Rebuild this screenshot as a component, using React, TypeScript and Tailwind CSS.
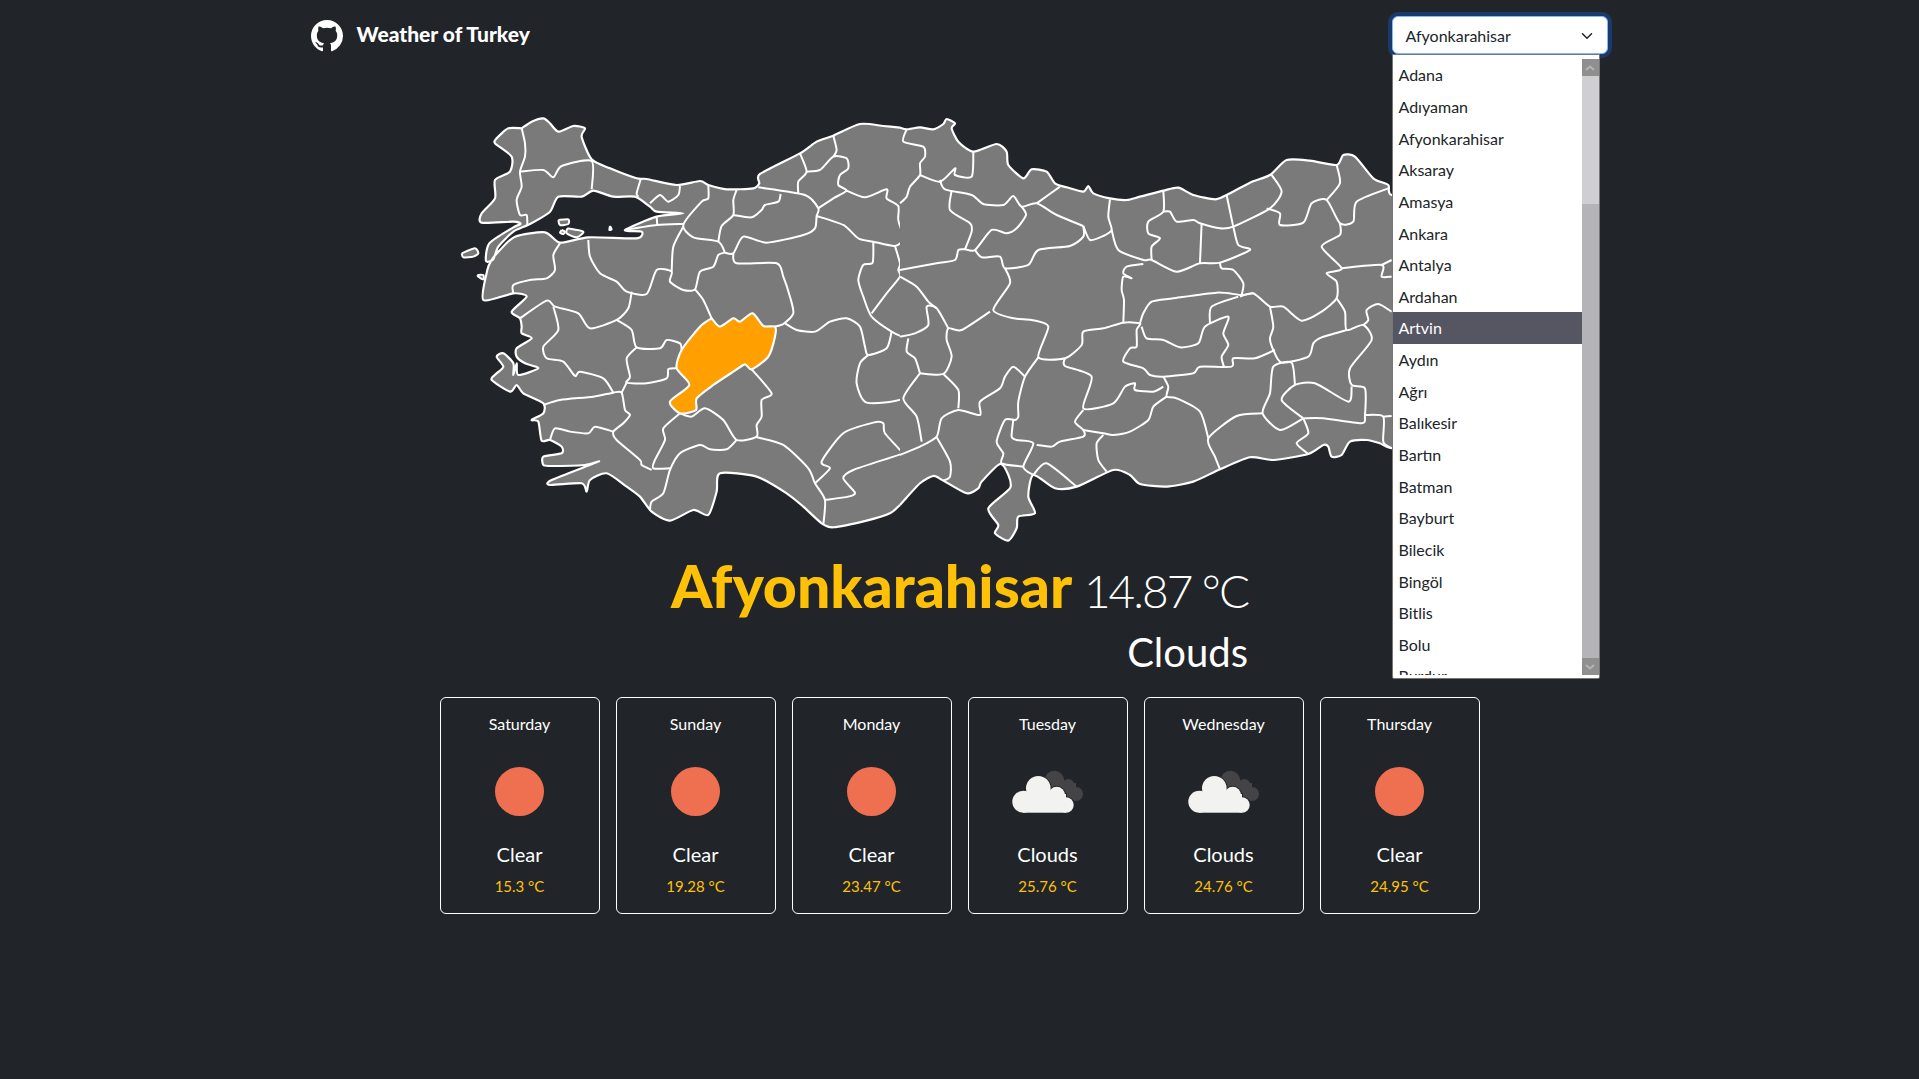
import { BsGithub } from 'react-icons/bs';
import { ChevronDown } from 'lucide-react';

const cities = ['Adana', 'Adıyaman', 'Afyonkarahisar', 'Aksaray', 'Amasya', 'Ankara', 'Antalya', 'Ardahan', 'Artvin', 'Aydın', 'Ağrı', 'Balıkesir', 'Bartın', 'Batman', 'Bayburt', 'Bilecik', 'Bingöl', 'Bitlis', 'Bolu', 'Burdur'];

const forecast = [
  { day: 'Saturday', sky: 'Clear', temp: '15.3 °C' },
  { day: 'Sunday', sky: 'Clear', temp: '19.28 °C' },
  { day: 'Monday', sky: 'Clear', temp: '23.47 °C' },
  { day: 'Tuesday', sky: 'Clouds', temp: '25.76 °C' },
  { day: 'Wednesday', sky: 'Clouds', temp: '24.76 °C' },
  { day: 'Thursday', sky: 'Clear', temp: '24.95 °C' },
];

// turns a traced polyline into a smooth curve through the same points
function curve(line: string) {
  return line
    .split('M')
    .filter(Boolean)
    .map((part) => {
      const pts = part.replace('Z', '').split('L').map((p) => p.trim().split(' ').map(Number));
      let out = `M${pts[0][0]} ${pts[0][1]}`;
      for (let i = 0; i < pts.length - 1; i++) {
        const a = pts[Math.max(i - 1, 0)];
        const b = pts[i];
        const c = pts[i + 1];
        const d = pts[Math.min(i + 2, pts.length - 1)];
        const k = 0.12;
        out += `C${b[0] + (c[0] - a[0]) * k} ${b[1] + (c[1] - a[1]) * k} ${c[0] - (d[0] - b[0]) * k} ${c[1] - (d[1] - b[1]) * k} ${c[0]} ${c[1]}`;
      }
      return out;
    })
    .join('');
}

// map traced in two halves, both in 3x crop coordinates
const westNorth = curve(
  'M215 85L245 65L280 55L300 70L325 95L370 78L405 85L395 110L425 178L480 205L560 235L590 237L680 255L750 243L775 255L830 268L910 265L928 250L930 222L1050 160L1100 125L1150 107L1230 72L1300 78L1350 83',
);

const westSouth = curve(
  'M1350 1215L1320 1240L1250 1262L1150 1282L1115 1270L1060 1220L1010 1180L920 1130L810 1120L800 1175L775 1245L730 1230L660 1262L605 1235L570 1190L530 1160L470 1120L420 1140L410 1175L395 1150L300 1155L305 1140L445 1085L405 1095L300 1098L280 1095L280 1070L335 1060L335 1040L300 1020L275 1022L265 965L245 960L280 940L280 910L220 880L200 855L180 875L125 840L140 820L160 800L140 770L160 760L190 790L190 825L200 790L205 825L265 805L225 790L200 770L200 745L245 715L215 700L215 680L210 655L185 635L230 590L190 580L100 600L112 510L125 480L150 450L195 410L285 397L330 428L415 412L560 415L575 395L525 390L620 350L700 340L620 335L600 320L555 290L490 290L430 272L395 290L325 290L300 335L240 372L190 395L145 440L130 478L108 483L118 430L190 382L212 372L190 365L95 368L95 340L135 295L135 240L180 215L185 170L135 130L140 115L175 85L215 85',
);

const eastCoast = curve(
  'M0 83L20 88L60 82L100 88L130 72L140 57L165 70L155 85L175 125L220 155L290 132L320 155L325 195L370 235L395 208L440 215L465 250L500 262L550 275L565 258L580 280L630 295L680 300L720 290L790 272L835 263L880 285L945 298L980 285L1050 248L1110 225L1160 180L1230 182L1310 195L1330 165L1365 170L1420 235L1465 255L1475 285L1600 300L1600 1050L1475 1045L1440 1030L1400 1020L1350 1025L1325 1065L1295 1070L1285 1040L1270 1035L1225 1062L1120 1080L1050 1072L960 1108L880 1145L800 1160L720 1152L690 1125L640 1110L530 1160L465 1165L400 1125L385 1190L405 1240L355 1250L350 1285L325 1322L285 1300L295 1275L265 1225L330 1165L325 1125L300 1092L245 1145L235 1165L200 1180L130 1142L100 1128L60 1150L0 1215',
);

const islands = [
  'M35 460L75 445L85 460L70 470L40 472L35 460',
  'M82 525L100 525L100 538L85 530L82 525',
  'M325 360L355 358L355 372L330 375L325 360',
  'M335 390L345 395L340 402L330 398L335 390',
  'M352 385L400 395L380 412L350 400L352 385',
  'M480 378L485 388L478 390L480 378',
];

const westLines = [
  'M215 85L225 130L225 170L210 215L215 260L200 300L210 345L230 345L232 375',
  'M210 215L280 210L310 232L335 198L425 183L425 268',
  'M572 238L560 280L565 290',
  'M690 258L685 285L655 305L630 285L600 310',
  'M525 390L620 375L700 372M620 350L622 378',
  'M775 255L775 295L755 305L700 375L730 412L805 425L825 458',
  'M860 270L850 300L850 345L815 378L805 425',
  'M850 345L905 352L935 330L945 315L985 305L992 282',
  'M925 262L1065 285L1105 325L1100 348L1095 385L1060 405L950 428L880 410L850 460L825 458',
  'M1050 160L1070 215L1045 245L1045 280',
  'M1070 215L1110 210L1150 170L1190 175L1195 205L1170 225L1165 255L1190 272L1150 295L1105 325',
  'M1150 107L1160 150L1150 170',
  'M1190 272L1245 292L1310 268L1310 295L1345 318L1345 360L1360 415L1335 438L1270 425L1225 415L1180 375L1100 348',
  'M1270 425L1268 488L1240 495L1225 540L1240 590L1265 650L1325 695L1370 715L1395 720L1395 690L1440 670',
  'M1335 438L1350 490L1345 510L1350 530L1310 580L1265 640',
  'M1345 510L1410 495L1440 495M1350 530L1390 550L1430 600L1440 605',
  'M415 420L420 470L450 520L500 545L530 575L590 582L620 510L665 515L660 545L700 570L735 568L750 515L790 500L805 465L825 458',
  'M700 380L670 440L665 515',
  'M545 575L535 625L500 660L420 685L385 640L315 620L290 602L210 655',
  'M330 430L310 465L315 510L290 535L240 540L190 555L190 580',
  'M500 660L545 690L560 742L630 745L650 720L690 730L695 750',
  'M560 742L530 775L540 830L530 848L590 850L650 835L655 808L680 805',
  'M735 568L760 600L785 655',
  'M850 462L860 490L980 490L1000 530L1020 590L1030 640L1000 672L975 680',
  'M1005 670L1040 690L1095 695L1140 665L1190 655L1230 680L1245 740L1255 765L1310 745L1325 695',
  'M1255 765L1230 790L1220 850L1250 908L1360 895L1415 815L1440 815',
  'M1365 895L1405 955L1400 1000L1420 1025',
  'M905 808L965 880L935 900L935 950L920 975L920 1010L860 1020L820 960L765 925L725 950L690 940',
  'M690 940L640 985L645 1020L615 1080L610 1105L660 1105',
  'M920 1012L1000 1035L1075 1105L1095 1150L1125 1200L1120 1275',
  'M860 1020L830 1048L780 1048L750 1035L690 1060L660 1110L640 1180L605 1205L600 1230',
  'M1095 1150L1140 1105L1115 1085L1180 1000L1270 968L1300 970L1305 1000L1360 1060',
  'M1125 1200L1195 1190L1215 1178L1180 1135L1210 1110L1360 1060L1440 1025',
  'M280 915L330 900L430 890L490 878L515 878L525 930L540 945L520 970L490 995L500 1020L570 1080L575 1095L605 1110',
  'M490 878L460 835L390 815L375 828L340 785L290 775L280 740L325 690L310 620',
  'M490 995L435 980L415 1000L360 995L315 985L300 1020',
  'M530 848L515 878',
];

const eastLines = [
  'M20 88L10 125L70 140L75 170L60 190L60 225L30 260L20 290L0 310',
  'M60 225L120 245L165 205L165 225L215 230L220 155',
  'M120 240L135 268L215 285L250 312L310 315L340 288L365 320L410 310L470 345L550 378',
  'M410 310L480 260',
  'M155 272L150 330L210 370L215 395L195 448',
  'M365 320L378 345L350 385L320 400L275 390L225 450L195 448L175 450L165 480L110 490L0 510',
  'M225 450L245 472L300 470L315 505L385 495L415 450L510 438L550 410L550 378',
  'M550 378L570 420L610 408L635 390L625 350L630 298',
  'M635 390L655 450L730 480L755 480L830 515L900 490L960 488L1050 450L1015 435L1000 380L980 285',
  'M790 272L790 335L745 365L745 400L780 415L755 440L755 480',
  'M790 335L810 335L830 365L880 360L900 370L960 385L1000 380L1110 325L1145 275L1115 225',
  'M905 370L900 490',
  'M1100 325L1140 340L1140 375L1210 368L1235 310L1280 300L1320 370L1360 365L1370 305L1465 265',
  'M1310 195L1320 250L1280 300',
  'M1320 370L1320 405L1265 440L1325 505L1280 520L1310 545L1310 595L1265 635L1205 662L1150 620L1110 620L1060 580L1020 590',
  'M960 488L965 505L1000 510L1030 550L1025 585',
  'M1325 505L1445 495L1445 530L1475 530M1445 495L1475 480',
  'M1310 595L1335 635L1340 690L1390 675L1415 720L1350 805L1355 855L1395 865L1395 945L1385 970L1270 955L1210 955',
  'M1340 690L1265 712L1240 730L1225 770L1145 788L1120 750L1110 715L1120 680L1110 620',
  'M1390 675L1405 660L1400 630L1435 612L1475 635',
  'M1395 945L1450 950L1450 1025L1475 1045M1450 950L1475 948',
  'M1210 955L1225 1000L1190 1030L1225 1062',
  'M1210 955L1145 900L1185 855L1245 850L1345 905L1355 860',
  'M1185 855L1175 788L1120 800L1110 880L1088 940L1140 990L1210 955',
  'M1088 940L1010 948L925 1015L945 1070L960 1108',
  'M925 1015L900 935L830 895L800 890L805 860L790 830',
  'M1125 750L1065 775L1000 775L995 800L900 800L880 820L790 830L750 825L730 805L670 785L690 745L710 740L710 690L720 670L670 668L610 685L550 695L545 735L495 775L415 772L445 680L395 660L340 655L280 630L330 550L315 505',
  'M670 668L672 600L665 570L670 530L695 535L670 520L680 500L730 492',
  'M720 670L730 640L755 605L820 595L950 578L1025 585L1060 580',
  'M725 680L740 715L790 720L840 742L895 730L915 680L985 650L970 700L985 735L965 770L972 800',
  'M1015 590L935 620L930 670',
  'M495 775L495 798L575 830L550 925L640 910L675 860L705 850L705 870L760 875L790 860',
  'M415 772L375 830L355 905L355 950L345 960L315 960L290 1025L310 1060L305 1090L370 1100',
  'M375 830L340 800L315 830L300 865L240 905L240 945L175 930L125 955L110 1010L60 1040L0 1065',
  'M60 820L130 822L155 770L140 720L145 685L185 690L270 635',
  'M145 685L110 625L80 620L85 675L45 700L0 710',
  'M60 820L10 895L50 950L65 1025',
  'M130 822L175 870L175 925',
  'M25 715L20 755L45 775L60 820',
  'M0 530L50 560L85 605L110 625',
  'M110 1012L150 1085L150 1130L130 1142',
  'M340 960L335 1010L350 1020L400 1030L370 1100L400 1125',
  'M410 1035L455 1040L480 1025L550 1010L550 990L525 965L550 930',
  'M550 990L610 1000L640 1005L690 995L745 960L760 920L800 890',
  'M610 1005L590 1030L595 1080L620 1115',
  'M400 1125L440 1090L530 1160',
];

const afyon =
  'M785 655L810 680L850 655L870 665L908 640L940 678L975 680L975 710L955 770L905 808L885 793L850 815L790 855L740 895L738 930L690 940L660 905L718 855L680 805L695 750L750 680L785 655';

function TurkeyMap() {
  return (
    <svg viewBox="450 110 1020 440" className="w-[1020px] h-[440px] block">
      <defs>
        <clipPath id="west-half"><rect x="0" y="0" width="1350" height="1400" /></clipPath>
      </defs>
      <g transform="translate(900 100) scale(0.3333)">
        <path d={eastCoast + 'Z'} fill="#7a7a7a" />
      </g>
      <g transform="translate(450 100) scale(0.3333)">
        <path d={westNorth + westSouth.replace('M', 'L') + 'Z'} fill="#7a7a7a" />
        <path d="M1330 95H1370V1200H1330Z" fill="#7a7a7a" />
        <path d={westNorth} fill="none" stroke="#fff" strokeWidth="6.500" strokeLinejoin="round" />
        <path d={westSouth} fill="none" stroke="#fff" strokeWidth="6.500" strokeLinejoin="round" />
        <g fill="#7a7a7a" stroke="#fff" strokeWidth="6" strokeLinejoin="round">
          {islands.map((d, i) => <path key={i} d={curve(d)} />)}
        </g>
        <g fill="none" stroke="#fff" strokeWidth="6" strokeLinejoin="round" clipPath="url(#west-half)">
          {westLines.map((d, i) => <path key={i} d={curve(d)} />)}
        </g>
        <path d={curve(afyon)} fill="#ff9f00" stroke="#fff" strokeWidth="6.500" strokeLinejoin="round" />
      </g>
      <g transform="translate(900 100) scale(0.3333)">
        <path d={eastCoast} fill="none" stroke="#fff" strokeWidth="6.500" strokeLinejoin="round" />
        <g fill="none" stroke="#fff" strokeWidth="6" strokeLinejoin="round">
          {eastLines.map((d, i) => <path key={i} d={curve(d)} />)}
        </g>
      </g>
    </svg>
  );
}

function SunIcon() {
  return <div className="w-[49px] h-[49px] rounded-full bg-[#ee7050]" />;
}

function CloudIcon() {
  const front = (
    <>
      <circle cx="13.300" cy="35.700" r="11" />
      <circle cx="28.300" cy="22.300" r="12.300" />
      <circle cx="46.700" cy="29" r="8.300" />
      <circle cx="56" cy="39" r="7.700" />
      <rect x="13" y="28" width="43" height="18.700" />
    </>
  );
  return (
    <svg viewBox="0 0 76 50" className="w-[76px] h-[50px]">
      <g fill="#444446">
        <circle cx="44.300" cy="14.700" r="10" />
        <circle cx="58.300" cy="19" r="6" />
        <circle cx="66" cy="28" r="7" />
        <rect x="40" y="17" width="26" height="16" />
      </g>
      <g fill="#212529" stroke="#212529" strokeWidth="2">{front}</g>
      <g fill="#f2f2f0">{front}</g>
    </svg>
  );
}

function CityDropdown() {
  return (
    <div className="relative w-[216px]">
      <div className="h-[38px] flex items-center justify-between rounded-md bg-white border border-[#86b7fe] ring-4 ring-[#1a3a6b] pl-[13px] pr-[10px] pt-[1px] text-[16px] text-[#212529]">
        <span>Afyonkarahisar</span>
        <ChevronDown className="w-[18px] h-[18px] mr-[1px]" strokeWidth={2} />
      </div>
      <div className="absolute z-10 top-[38px] left-0 w-[208px] h-[625px] bg-white border border-[#767676] rounded-b-[2px] flex pt-[4px] pb-[3px] overflow-hidden">
        <ul className="flex-1 overflow-hidden text-[16px] text-[#212529] leading-[21px]">
          {cities.map((c) => (
            <li
              key={c}
              className={c === 'Artvin' ? 'h-[31.65px] pl-[6px] flex items-center bg-[#565662] text-white' : 'h-[31.65px] pl-[6px] flex items-center'}
            >
              {c}
            </li>
          ))}
        </ul>
        <div className="w-[17px] flex flex-col bg-[#cfcfd2]">
          <div className="h-[17px] bg-[#8f8f90] flex items-center justify-center">
            <svg viewBox="0 0 10 6" className="w-[10px] h-[6px]"><path d="M1 5L5 1.500L9 5" fill="none" stroke="#b4b4b6" strokeWidth="2" /></svg>
          </div>
          <div className="h-[128px]" />
          <div className="flex-1 bg-[#b4b4b6]" />
          <div className="h-[17px] bg-[#8f8f90] flex items-center justify-center">
            <svg viewBox="0 0 10 6" className="w-[10px] h-[6px]"><path d="M1 1L5 4.500L9 1" fill="none" stroke="#b4b4b6" strokeWidth="2" /></svg>
          </div>
        </div>
      </div>
    </div>
  );
}

export default function App() {
  return (
    <div className="min-h-[1079px] bg-[#212529] text-white font-['Lato',sans-serif]">
      <header className="w-[1320px] mx-auto px-[12px] h-[110px] pt-[16px] flex items-start justify-between">
        <div className="flex items-center gap-[14px] mt-[4px] -ml-[1px]">
          <BsGithub className="w-[32px] h-[32px]" />
          <span className="text-[21px] font-black leading-[28px] -mt-[5px]">Weather of Turkey</span>
        </div>
        <CityDropdown />
      </header>
      <main className="flex flex-col items-center">
        <TurkeyMap />
        <div className="flex flex-col items-end w-[577px]">
          <div className="flex items-baseline justify-between w-full h-[76px] -mt-[2px] mb-[2px] whitespace-nowrap">
            <span className="text-[59px] font-black text-[#ffc107] leading-[76px]">Afyonkarahisar</span>
            <span className="text-[46px] font-light tracking-[-2px] leading-[76px]">14.87 °C</span>
          </div>
          <div className="text-[40px] leading-[52px] font-normal">Clouds</div>
        </div>
        <div className="mt-[19px] flex gap-[16px]">
          {forecast.map((f) => (
            <div key={f.day} className="w-[160px] h-[217px] border border-white rounded-md flex flex-col items-center pt-[14px]">
              <div className="text-[16px] leading-[24px]">{f.day}</div>
              <div className="h-[50px] mt-[30px] flex items-center justify-center">
                {f.sky === 'Clear' ? <SunIcon /> : <CloudIcon />}
              </div>
              <div className="mt-[24px] text-[20px] leading-[28px]">{f.sky}</div>
              <div className="mt-[6px] text-[15px] leading-[24px] text-[#ffc107]">{f.temp}</div>
            </div>
          ))}
        </div>
      </main>
    </div>
  );
}
